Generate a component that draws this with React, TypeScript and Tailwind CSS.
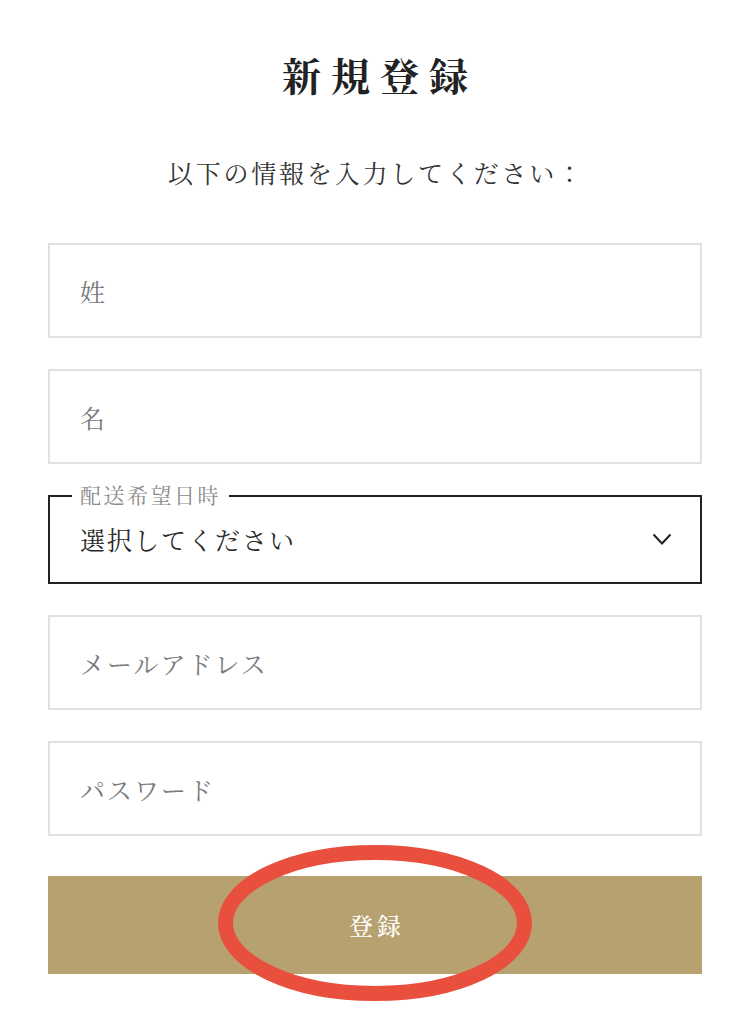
import React from 'react';

const fields = ['姓', '名'];
const fields2 = ['メールアドレス', 'パスワード'];

const TextField = ({ placeholder }: { placeholder: string }) => (
  <input
    type="text"
    placeholder={placeholder}
    className="block w-full h-[95px] border-2 border-[#e1e1e1] bg-white px-[30px] text-[25px] tracking-[2px] text-[#333] placeholder:text-[#7a7a7a] outline-none"
  />
);

export default function App() {
  return (
    <div className="relative min-h-[1012px] w-full bg-white font-['Noto_Serif_CJK_JP','Noto_Sans_CJK_JP',serif] text-[#222]">
      <div className="px-[48px] pt-[54px]">
        <h1 className="text-center text-[39px] leading-[40px] font-bold tracking-[10px] pl-[10px]">新規登録</h1>
        <p className="mt-[63px] text-center text-[25px] leading-[30px] tracking-[2.8px] pl-[2.8px] text-[#333]">
          以下の情報を入力してください：
        </p>

        <form className="mt-[56px] flex flex-col gap-[31px]" onSubmit={(e) => e.preventDefault()}>
          {fields.map((f) => (
            <TextField key={f} placeholder={f} />
          ))}

          {/* delivery date select with notched label */}
          <div className="relative h-[89px] border-2 border-[#222] flex items-center justify-between pl-[30px] pr-[28px]">
            <span className="absolute left-[22px] -top-[15px] bg-white px-[8px] text-[21px] leading-[24px] tracking-[2.5px] text-[#8a8a8a]">
              配送希望日時
            </span>
            <span className="text-[25px] tracking-[2px] text-[#2a2a2a]">選択してください</span>
            <svg width="20" height="13" viewBox="0 0 20 13" fill="none">
              <path d="M1.5 1.5 L10 10.5 L18.5 1.5" stroke="#222" strokeWidth="2" />
            </svg>
          </div>

          {fields2.map((f) => (
            <TextField key={f} placeholder={f} />
          ))}

          <button
            type="submit"
            className="mt-[9px] h-[98px] w-full bg-[#b8a170] text-white text-[24px] font-medium tracking-[4px] pl-[4px]"
          >
            登録
          </button>
        </form>
      </div>

      {/* red annotation ring around the button */}
      <svg className="absolute left-[218px] top-[845px] pointer-events-none" width="314" height="156" viewBox="0 0 314 156">
        <ellipse cx="157" cy="78" rx="149.5" ry="70.5" fill="none" stroke="#e94f3d" strokeWidth="15" />
      </svg>
    </div>
  );
}
